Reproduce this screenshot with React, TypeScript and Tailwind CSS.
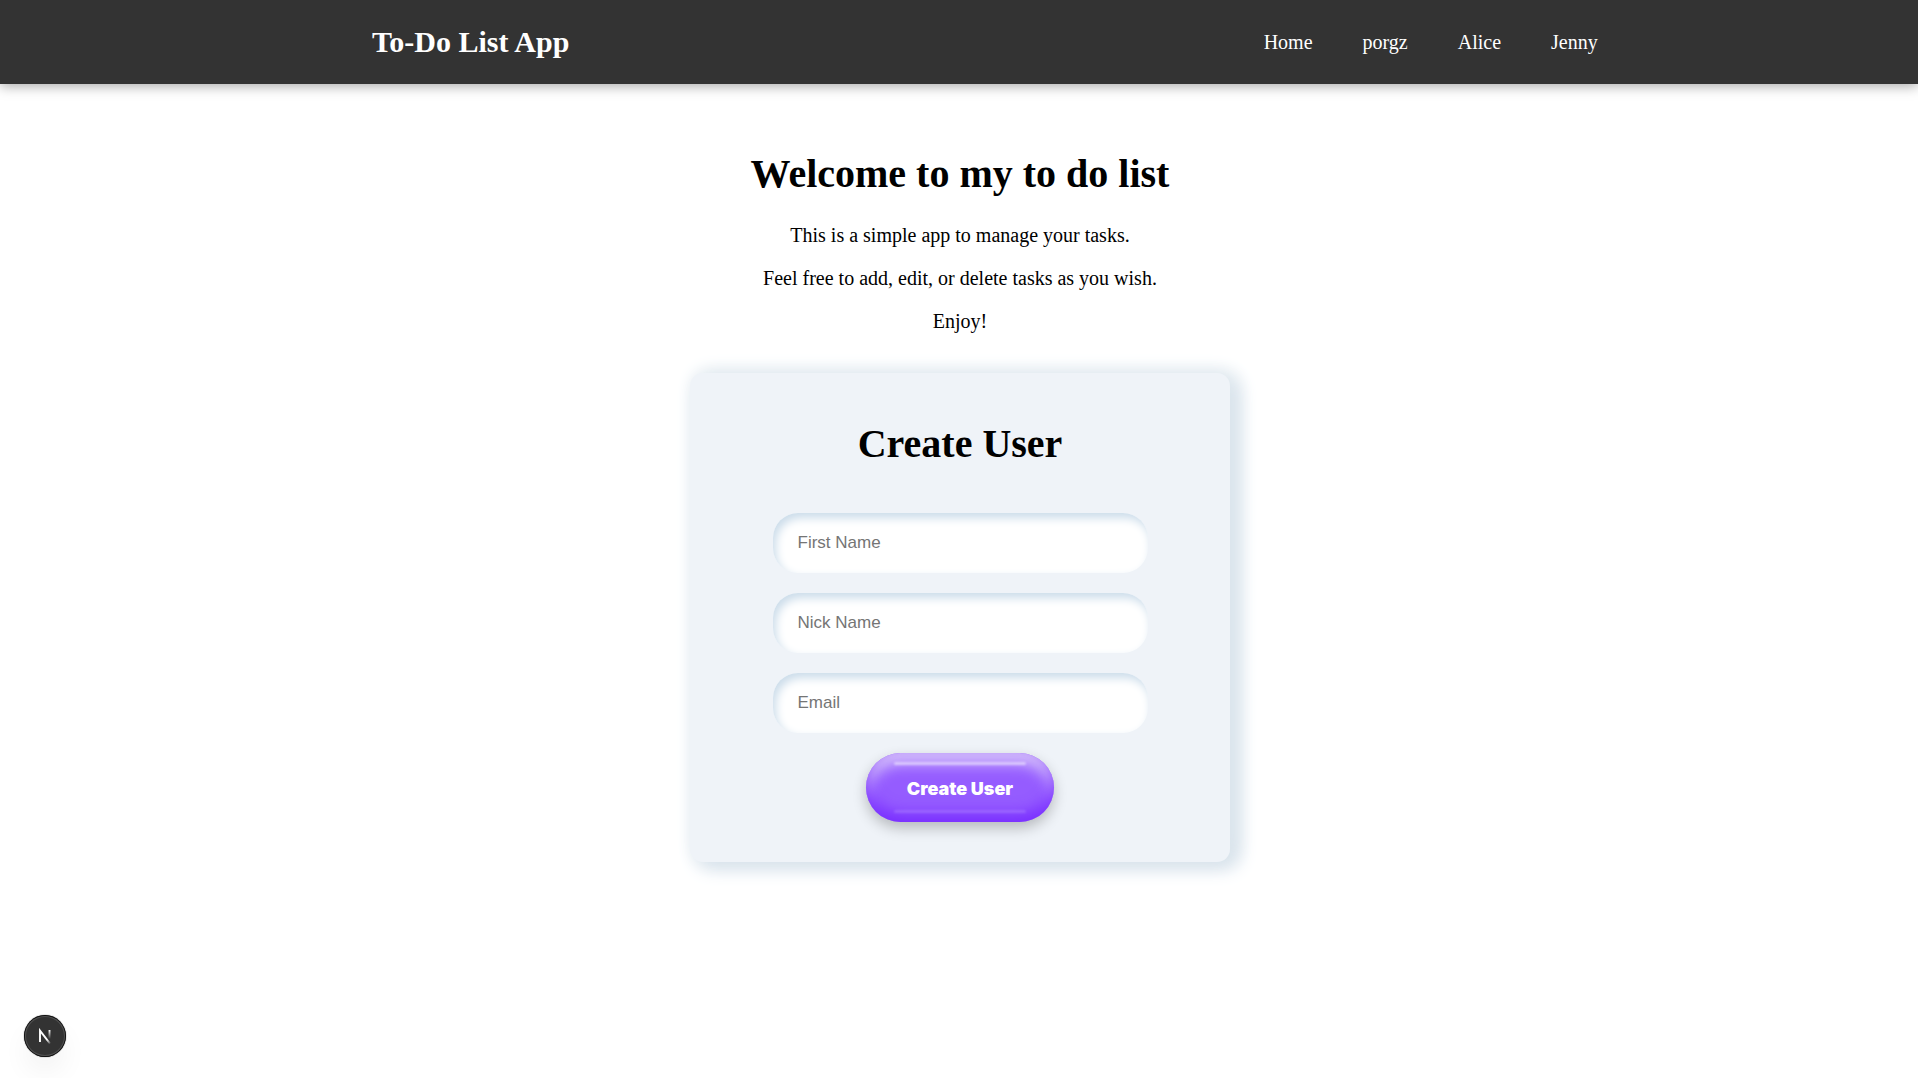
const links = ["Home", "porgz", "Alice", "Jenny"];
const fields = [
  { id: "firstName", label: "First Name", type: "text" },
  { id: "nickName", label: "Nick Name", type: "text" },
  { id: "email", label: "Email", type: "email" },
];

function Header() {
  return (
    <header className="flex items-center justify-between bg-[#333] py-[25px] pr-[16.7%] pl-[19.4%] text-white shadow-[0_2px_12px_rgba(0,0,0,0.35)]">
      <div className="text-[30px] leading-[34px] font-bold">To-Do List App</div>
      <nav className="pt-0.5">
        <ul className="flex gap-[50px]">
          {links.map((name) => (
            <li key={name}>
              <a href="#" className="text-[20px] leading-[23px]">{name}</a>
            </li>
          ))}
        </ul>
      </nav>
    </header>
  );
}

function CreateUserForm() {
  return (
    <form
      onSubmit={(e) => e.preventDefault()}
      className="mt-10 flex w-full max-w-[540px] flex-col items-center gap-5 rounded-[13px] bg-[#eff3f8] pt-12 pb-10 shadow-[5px_-1px_19px_#dfe8ee,8px_5px_19px_#cbd9e6]"
    >
      <h2 className="mb-[26px] text-[40px] leading-[46px] font-bold">Create User</h2>
      {fields.map((f) => (
        <input
          key={f.id}
          id={f.id}
          type={f.type}
          aria-label={f.label}
          placeholder={f.label}
          className="h-[60px] w-[375px] rounded-[25px] bg-white px-[25px] font-['Liberation_Sans',Arial,sans-serif] text-[17px] shadow-[inset_3px_5px_10px_#cbdcea] outline-none placeholder:text-[#757575]"
        />
      ))}
      <button
        type="submit"
        className="relative h-[69px] w-[188px] cursor-pointer rounded-full bg-[#955cff] pt-0.5 font-['Inter',sans-serif] text-[18px] font-black text-white shadow-[0_6px_14px_rgba(0,0,0,0.24),inset_0_-8px_15px_#772bff,inset_0_10px_15px_#dccbfb]"
      >
        <span className="absolute inset-x-7 top-[9px] h-[3px] rounded-full bg-white/50 blur-[1px]" />
        <span className="absolute inset-x-7 bottom-[9px] h-[3px] rounded-full bg-white/15 blur-[1px]" />
        Create User
      </button>
    </form>
  );
}

function DevBadge() {
  return (
    <button
      aria-label="Open Next.js Dev Tools"
      className="fixed bottom-[22px] left-[25px] flex size-10 items-center justify-center rounded-full bg-[#333] shadow-[0_0_0_1px_#111,inset_0_0_0_1px_#4f4f4f,0_0_1px_1px_#171717,0_16px_32px_-8px_rgba(0,0,0,0.14)]"
    >
      <svg width="16" height="16" viewBox="0 0 16 16" fill="none">
        <defs>
          <linearGradient id="diag" x1="8" y1="8" x2="14" y2="16" gradientUnits="userSpaceOnUse">
            <stop stopColor="#fff" />
            <stop offset="0.4" stopColor="#fff" />
            <stop offset="1" stopColor="#fff" stopOpacity="0" />
          </linearGradient>
          <linearGradient id="stem" x1="12" y1="2" x2="12" y2="11" gradientUnits="userSpaceOnUse">
            <stop stopColor="#fff" />
            <stop offset="1" stopColor="#fff" stopOpacity="0" />
          </linearGradient>
        </defs>
        <path d="M3 14V2.6L13 15.6" stroke="url(#diag)" strokeWidth="1.9" />
        <path d="M12.5 2V11" stroke="url(#stem)" strokeWidth="1.9" />
      </svg>
    </button>
  );
}

export default function App() {
  return (
    <div className="min-h-screen bg-white font-['Liberation_Serif','Times_New_Roman',serif] text-black">
      <Header />
      <main className="flex flex-col items-center pt-[67px] pr-10 pb-10 pl-[42px]">
        <h1 className="mb-[27px] text-[40px] leading-[46px] font-bold">Welcome to my to do list</h1>
        <div className="flex flex-col items-center gap-5 text-[20px] leading-[23px]">
          <p>This is a simple app to manage your tasks.</p>
          <p>Feel free to add, edit, or delete tasks as you wish.</p>
          <p>Enjoy!</p>
        </div>
        <CreateUserForm />
      </main>
      <DevBadge />
    </div>
  );
}
